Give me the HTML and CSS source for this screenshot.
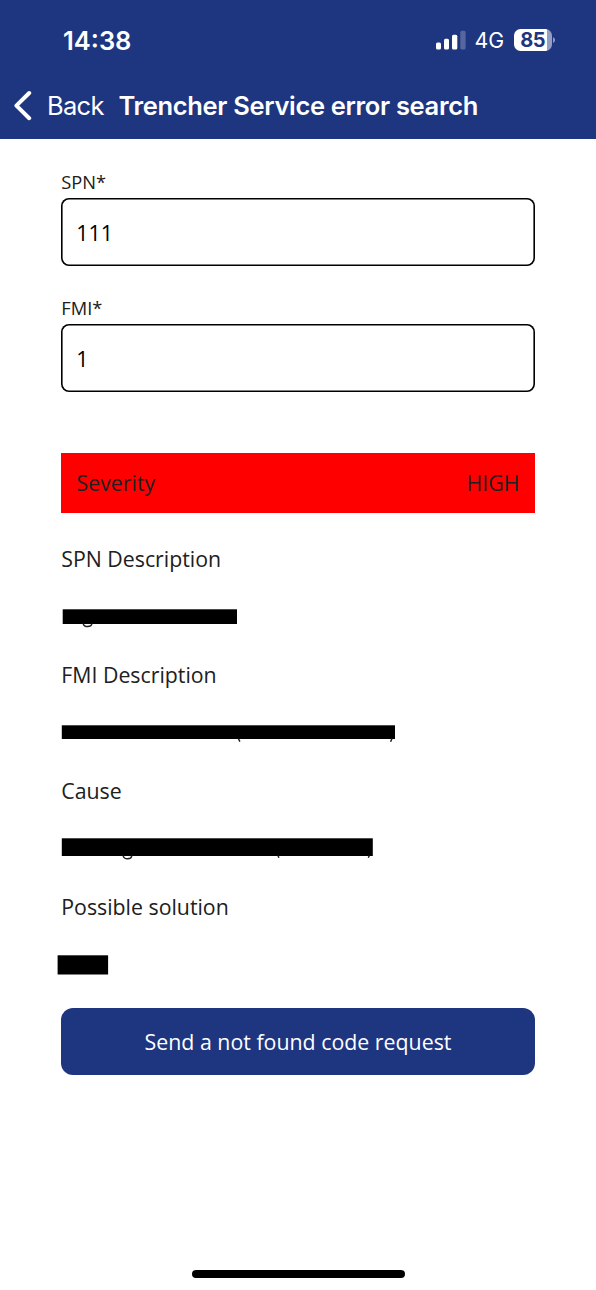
FILE: index.html
```
<!DOCTYPE html>
<html lang="en">
<head>
  <meta charset="UTF-8"/>
  <meta name="viewport" content="width=device-width, initial-scale=1">
  <title>Trencher Service error search</title>
  <link rel="stylesheet" href="styles.css">
</head>
<body>

  <header class="header">
    <div class="status-bar">
      <span class="time">14:38</span>
      <div class="status-icons">
        <svg class="signal" width="30" height="20" viewBox="0 0 30 20" fill="#fff">
          <rect x="0" y="12.5" width="5" height="7" rx="1.5"/>
          <rect x="8" y="8.7" width="5" height="10.8" rx="1.5"/>
          <rect x="16" y="4.7" width="5.3" height="14.8" rx="1.5"/>
          <rect x="24.3" y="0.8" width="5.3" height="18.7" rx="1.5" opacity="0.25"/>
        </svg>
        <span class="network">4G</span>
        <div class="battery"><span>85</span></div>
        <svg class="battery-tip" width="3" height="8" viewBox="0 0 3 8"><path d="M0 1.2C2.7 2 2.7 6 0 6.8Z" fill="#fff" opacity="0.5"/></svg>
      </div>
    </div>
    <nav class="nav-bar">
      <svg class="chevron" width="20" height="32" viewBox="0 0 20 32"><path d="M16.2 4L3.4 16.6L16.2 29.2" fill="none" stroke="#fff" stroke-width="4" stroke-linecap="round" stroke-linejoin="round"/></svg>
      <a class="back">Back</a>
      <h1>Trencher Service error search</h1>
    </nav>
  </header>

  <main class="content">
    <div class="field">
      <label for="spn">SPN*</label>
      <input id="spn" type="text" value="111">
    </div>
    <div class="field">
      <label for="fmi">FMI*</label>
      <input id="fmi" type="text" value="1">
    </div>

    <div class="severity">
      <span>Severity</span>
      <span>HIGH</span>
    </div>

    <section class="result">
      <h2>SPN Description</h2>
      <svg class="value" viewBox="0 0 473 58">
        <rect x="1.7" y="21.3" width="174.3" height="14.7"/>
        <path d="M22.3 35.5C22.3 39.6 30.8 39.4 30.8 35.5"/>
      </svg>

      <h2>FMI Description</h2>
      <svg class="value" viewBox="0 0 473 58">
        <rect x="0.8" y="21.3" width="333.2" height="13.7"/>
        <path d="M177.3 34.5L178.9 37.7M331 34.5L329.6 37.7"/>
      </svg>

      <h2>Cause</h2>
      <svg class="value" viewBox="0 0 473 58">
        <rect x="0.8" y="18.3" width="311" height="17.7"/>
        <path d="M62.2 35.5C62.2 40 70.7 39.8 70.7 35.5M217 35.5L217.9 37.7M308.3 35.5L307.3 37.7"/>
      </svg>

      <h2>Possible solution</h2>
      <svg class="value" viewBox="0 0 473 58">
        <rect x="-3.4" y="19.3" width="50.5" height="19.2"/>
      </svg>
    </section>

    <button class="send-btn">Send a not found code request</button>
  </main>

  <div class="home-indicator"></div>

</body>
</html>
```

FILE: styles.css
```
* {
  box-sizing: border-box;
}

body {
  margin: 0;
  height: 1290px;
  display: flex;
  flex-direction: column;
  background: #fff;
  color: #202020;
  font-family: "Open Sans", "Noto Sans", sans-serif;
}

.header {
  height: 139.3px;
  background: #1e3580;
  color: #fff;
  font-family: Inter, sans-serif;
}

.status-bar {
  height: 80px;
  padding: 0 40px 0 63px;
  display: flex;
  align-items: center;
  justify-content: space-between;
}

.time {
  font-size: 25.5px;
  font-weight: 600;
}

.status-icons {
  display: flex;
  align-items: center;
}

.network {
  margin-left: 9px;
  width: 39px;
  font-size: 21.3px;
  font-weight: 400;
}

.battery {
  width: 38.5px;
  height: 21.5px;
  border-radius: 6.5px;
  background: linear-gradient(90deg, #fff 33px, #959fc4 33px);
  color: #1e3580;
  font-size: 20px;
  font-weight: 700;
  letter-spacing: -0.4px;
  line-height: 22.5px;
  text-align: center;
}

.battery-tip {
  margin-left: 1px;
}

.nav-bar {
  height: 50px;
  padding-left: 13px;
  display: flex;
  align-items: center;
}

.back {
  margin-left: 14px;
  width: 71.5px;
  font-size: 25.5px;
  letter-spacing: -0.7px;
}

h1 {
  margin: 0;
  font-size: 25.5px;
  font-weight: 600;
  letter-spacing: -0.33px;
  white-space: nowrap;
}

.content {
  padding: 31px 61.3px 0;
}

.field {
  height: 126.2px;
}

.field label {
  display: block;
  height: 28px;
  font-size: 18.3px;
  line-height: 23px;
}

.field input {
  display: block;
  width: 100%;
  height: 67.5px;
  padding: 0 15px;
  border: none;
  border-radius: 8px;
  box-shadow: inset 0 0 0 1.6px #000;
  background: #fff;
  color: #000;
  font-family: inherit;
  font-size: 21.4px;
}

.severity {
  height: 60px;
  margin-top: 30.3px;
  padding: 0 15.3px;
  display: flex;
  align-items: center;
  justify-content: space-between;
  background: #ff0000;
  font-size: 21.3px;
}

.result {
  margin-top: 17px;
}

h2 {
  margin: 0;
  font-size: 21.3px;
  font-weight: 400;
  line-height: 58px;
}

.value {
  display: block;
  width: 473px;
  height: 58px;
  overflow: visible;
}

.value path {
  fill: none;
  stroke: #202020;
  stroke-width: 1.5;
}

.send-btn {
  display: block;
  width: 100%;
  height: 67.5px;
  margin-top: 14px;
  border: none;
  border-radius: 12px;
  background: #1e3580;
  color: #fff;
  font-family: inherit;
  font-size: 21.35px;
}

.home-indicator {
  width: 213px;
  height: 8px;
  margin: auto auto 12.5px;
  border-radius: 4px;
  background: #000;
}
```
